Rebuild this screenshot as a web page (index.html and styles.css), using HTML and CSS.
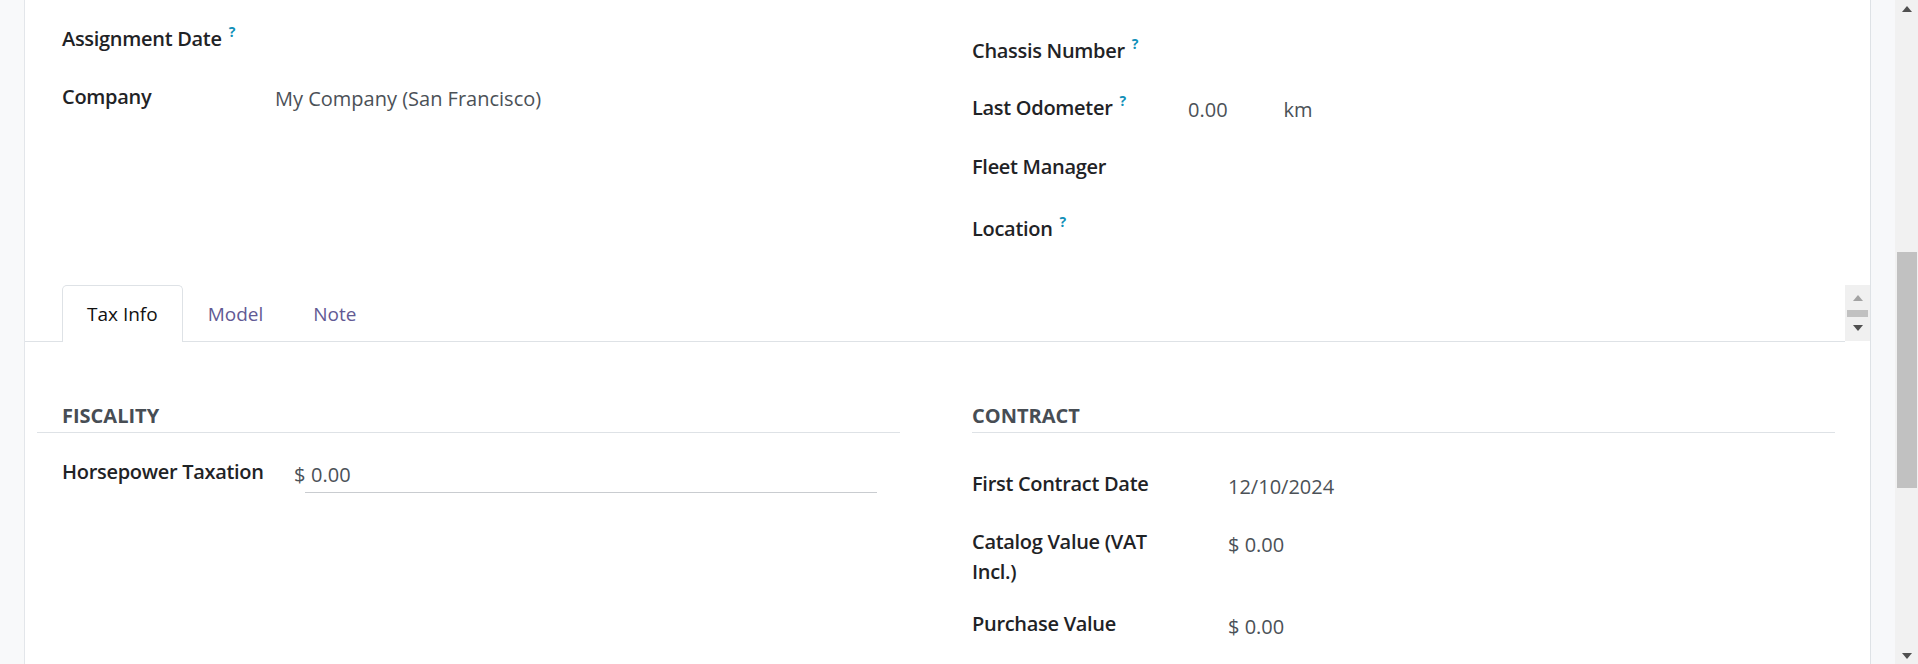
FILE: index.html
```html
<!DOCTYPE html>
<html lang="en">
<head>
    <meta charset="UTF-8">
    <title>Vehicle</title>
    <link rel="stylesheet" href="styles.css">
</head>
<body>
    <div class="gutter-left"></div>

    <div class="sheet">
        <div class="groups top">
            <div class="group group-left">
                <div class="field">
                    <div class="label lbl-company">Assignment Date<sup class="help">?</sup></div>
                    <div class="value"></div>
                </div>
                <div class="field">
                    <div class="label lbl-company">Company</div>
                    <div class="value">My Company (San Francisco)</div>
                </div>
            </div>
            <div class="group group-right">
                <div class="field">
                    <div class="label lbl-vehicle">Chassis Number<sup class="help">?</sup></div>
                    <div class="value"></div>
                </div>
                <div class="field">
                    <div class="label lbl-vehicle">Last Odometer<sup class="help">?</sup></div>
                    <div class="value">0.00<span class="unit">km</span></div>
                </div>
                <div class="field">
                    <div class="label lbl-vehicle">Fleet Manager</div>
                    <div class="value"></div>
                </div>
                <div class="field">
                    <div class="label lbl-vehicle">Location<sup class="help">?</sup></div>
                    <div class="value"></div>
                </div>
            </div>
        </div>

        <div class="tab-row">
            <ul class="tabs">
                <li class="tab active">Tax Info</li>
                <li class="tab">Model</li>
                <li class="tab">Note</li>
            </ul>
            <div class="tab-scroll">
                <span class="arrow up light"></span>
                <span class="bar"></span>
                <span class="arrow down"></span>
            </div>
        </div>

        <div class="groups pane">
            <div class="section section-left">
                <h3 class="section-title">Fiscality</h3>
                <div class="field">
                    <div class="label lbl-tax">Horsepower Taxation</div>
                    <div class="value monetary"><span class="currency">$</span><span class="input">0.00</span></div>
                </div>
            </div>
            <div class="section section-right">
                <h3 class="section-title">Contract</h3>
                <div class="field contract">
                    <div class="label lbl-contract">First Contract Date</div>
                    <div class="value">12/10/2024</div>
                </div>
                <div class="field contract">
                    <div class="label lbl-contract">Catalog Value (VAT Incl.)</div>
                    <div class="value">$ 0.00</div>
                </div>
                <div class="field contract">
                    <div class="label lbl-contract">Purchase Value</div>
                    <div class="value">$ 0.00</div>
                </div>
            </div>
        </div>
    </div>

    <div class="gutter-right"></div>

    <div class="scrollbar">
        <div class="sb-btn"><span class="arrow up"></span></div>
        <div class="thumb"></div>
        <div class="sb-fill"></div>
        <div class="sb-btn"><span class="arrow down"></span></div>
    </div>
</body>
</html>
```

FILE: styles.css
```css
* {
    box-sizing: border-box;
}

body {
    margin: 0;
    height: 664px;
    overflow: hidden;
    display: flex;
    background: #fff;
    color: #212529;
    font-family: "Open Sans", "Noto Sans", sans-serif;
    font-size: 20px;
    line-height: 30px;
}

.gutter-left {
    width: 25px;
    background: #f8f9fa;
    border-right: 1px solid #e3e6ea;
}

.sheet {
    flex: 1;
    min-width: 0;
    border-right: 1px solid #dee2e6;
}

.gutter-right {
    width: 24px;
    background: #f7f8fa;
}

/* page scrollbar */
.scrollbar {
    width: 23px;
    background: #f1f1f1;
    display: flex;
    flex-direction: column;
}

.sb-btn {
    height: 17px;
    display: flex;
    align-items: center;
    justify-content: center;
}

.thumb {
    margin: 235px 1px 0 2px;
    height: 236px;
    background: #c1c1c1;
}

.sb-fill {
    flex: 1;
}

.arrow {
    width: 0;
    height: 0;
    border-left: 5px solid transparent;
    border-right: 5px solid transparent;
}

.arrow.up {
    border-bottom: 6px solid #505050;
}

.arrow.down {
    border-top: 6px solid #505050;
}

.arrow.up.light {
    border-bottom-color: #a3a3a3;
}

/* field groups */
.groups {
    display: grid;
    grid-template-columns: 863px 863px;
    column-gap: 72px;
    padding: 0 35px 0 12px;
}

.group-left {
    padding: 24px 0 0 25px;
}

.group-right {
    padding: 36px 0 13px;
}

.field {
    display: flex;
    align-items: flex-start;
    min-height: 58px;
}

.group-right .field:nth-child(1) {
    min-height: 57px;
}

.group-right .field:nth-child(2) {
    min-height: 59px;
}

.group-right .field:nth-child(3) {
    min-height: 62px;
}

.label {
    flex: 0 0 auto;
    font-weight: 600;
    letter-spacing: -0.3px;
    color: #1f2326;
}

.lbl-company {
    width: 213px;
}

.lbl-vehicle {
    width: 216px;
}

.lbl-tax {
    width: 232px;
}

.lbl-contract {
    width: 200px;
    margin-right: 56px;
}

.value {
    padding-top: 2px;
    color: #4b5157;
}

.help {
    margin-left: 7px;
    font-size: 14px;
    font-weight: 700;
    letter-spacing: 0;
    line-height: 0;
    vertical-align: 9px;
    color: #1190b8;
}

.unit {
    margin-left: 56px;
}

/* tabs */
.tab-row {
    display: flex;
    align-items: flex-start;
}

.tabs {
    flex: 1;
    display: flex;
    list-style: none;
    margin: 0;
    padding: 0 0 0 37px;
    border-bottom: 1px solid #dee2e6;
    font-size: 19px;
}

.tab {
    margin-bottom: -1px;
    padding: 13px 24px 13px;
    border: 1px solid transparent;
    border-bottom: 0;
    border-radius: 5px 5px 0 0;
    color: #625a94;
}

.tab.active {
    background: #fff;
    border-color: #dee2e6;
    color: #111;
}

.tab-scroll {
    width: 25px;
    height: 56px;
    padding-top: 10px;
    background: #f0f0f0;
    display: flex;
    flex-direction: column;
    align-items: center;
}

.tab-scroll .bar {
    width: 21px;
    height: 7px;
    margin: 9px 0 8px;
    background: #c1c1c1;
}

/* notebook page */
.pane {
    padding-top: 59px;
}

.section-title {
    margin: 0;
    padding-bottom: 1px;
    font-size: 20px;
    font-weight: 700;
    text-transform: uppercase;
    color: #474d54;
    border-bottom: 1px solid #dee2e6;
}

.section-left .section-title {
    padding-left: 25px;
}

.section-left .field {
    margin-top: 24px;
    padding-left: 25px;
}

.section-right .section-title + .field {
    margin-top: 36px;
}

.field.contract {
    padding-bottom: 22px;
}

.field.contract .value,
.monetary {
    padding-top: 3px;
}

.monetary {
    display: flex;
}

.currency {
    width: 11px;
}

.input {
    width: 572px;
    padding: 0 0 2px 6px;
    border-bottom: 1px solid #c9ccd0;
}
```
